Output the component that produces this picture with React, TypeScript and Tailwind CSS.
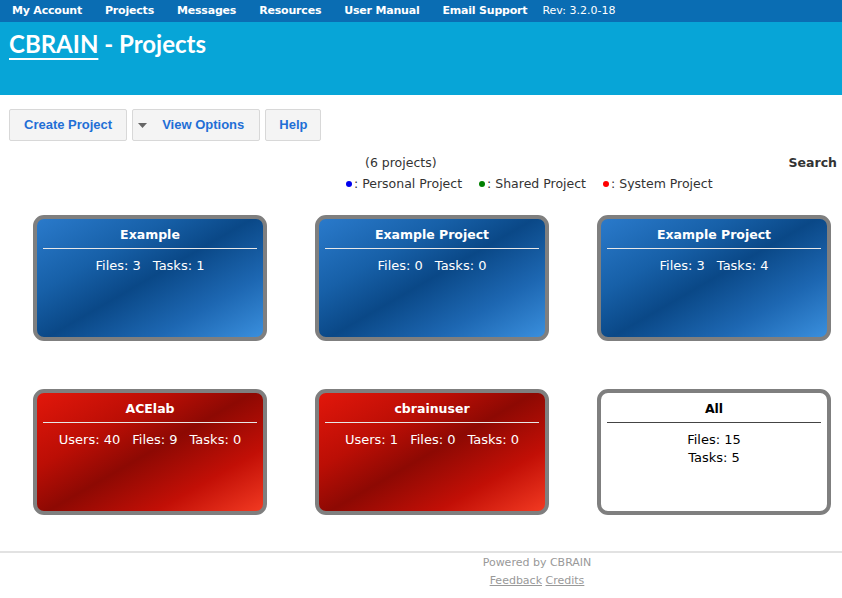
const verdana = "font-['DejaVu_Sans',Verdana,sans-serif]";

type Project = {
  name: string;
  kind: "personal" | "system" | "all";
  stats: string[];
  stacked?: boolean;
};

const projects: Project[] = [
  { name: "Example", kind: "personal", stats: ["Files: 3", "Tasks: 1"] },
  { name: "Example Project", kind: "personal", stats: ["Files: 0", "Tasks: 0"] },
  { name: "Example Project", kind: "personal", stats: ["Files: 3", "Tasks: 4"] },
  { name: "ACElab", kind: "system", stats: ["Users: 40", "Files: 9", "Tasks: 0"] },
  { name: "cbrainuser", kind: "system", stats: ["Users: 1", "Files: 0", "Tasks: 0"] },
  { name: "All", kind: "all", stats: ["Files: 15", "Tasks: 5"], stacked: true },
];

const navItems = ["My Account", "Projects", "Messages", "Resources", "User Manual", "Email Support"];

export default function App() {
  return (
    <div className={`min-h-[598px] bg-white ${verdana} text-[#333]`}>
      <div className="flex h-[22px] items-center bg-[#0a6db3] pl-[12px] text-[11px] text-white">
        {navItems.map((item) => (
          <span key={item} className="mr-[23px] font-bold tracking-[-0.2px]">
            {item}
          </span>
        ))}
        <span className="-ml-[8px]">Rev: 3.2.0-18</span>
      </div>
      <div className="h-[73px] bg-[#07a5d7] pl-[9px] pt-[8px]">
        <h1 className="font-['Lato',sans-serif] text-[24px] font-bold leading-[28px] text-white">
          <span className="underline decoration-2 underline-offset-[5px]">CBRAIN</span> - Projects
        </h1>
      </div>

      <div className="flex gap-[5px] pl-[9px] pt-[14px] font-['Liberation_Sans',Arial,sans-serif] text-[13px] font-bold text-[#1f6fd6]">
        <ToolButton className="px-[14px]">Create Project</ToolButton>
        <button className="flex h-[32px] items-center rounded-[2px] border border-[#d8d8d8] bg-[#f4f4f4] pl-[5px] pr-[15px]">
          <svg width="9" height="5" viewBox="0 0 9 5" className="mr-[15px]">
            <path d="M0 0h9L4.5 5z" fill="#666" />
          </svg>
          View Options
        </button>
        <ToolButton className="px-[13px]">Help</ToolButton>
      </div>

      <div className="relative mt-[12px] h-[44px] text-[12.5px]">
        <div className="absolute left-[365px] top-[1px]">(6 projects)</div>
        <div className="absolute right-[5px] top-[1px] font-bold">Search</div>
        <div className="absolute left-[346px] top-[22px] flex gap-[17px]">
          <Legend color="#0000ee" label="Personal Project" />
          <Legend color="#008000" label="Shared Project" />
          <Legend color="#ff0000" label="System Project" />
        </div>
      </div>

      <div className="grid grid-cols-[234px_234px_234px] gap-x-[48px] gap-y-[48px] pl-[33px] pt-[18px]">
        {projects.map((p, i) => (
          <ProjectCard key={i} project={p} />
        ))}
      </div>

      <div className="mt-[36px] border-t-2 border-[#e2e2e2] pl-[232px] pt-[2px] text-center text-[11px] text-[#999]">
        <div>Powered by CBRAIN</div>
        <div className="mt-[1px]">
          <span className="underline">Feedback</span> <span className="underline">Credits</span>
        </div>
      </div>
    </div>
  );
}

function ToolButton({ children, className }: { children: React.ReactNode; className: string }) {
  return (
    <button className={`h-[32px] rounded-[2px] border border-[#d8d8d8] bg-[#f4f4f4] ${className}`}>
      {children}
    </button>
  );
}

function Legend({ color, label }: { color: string; label: string }) {
  return (
    <span className="flex items-center">
      <span className="mr-[2px] inline-block size-[6px] rounded-full" style={{ backgroundColor: color }} />
      : {label}
    </span>
  );
}

function ProjectCard({ project }: { project: Project }) {
  const bg =
    project.kind === "personal"
      ? "bg-[linear-gradient(150deg,#2a7acb_0%,#1760a8_30%,#0a4887_50%,#1d67b2_75%,#3a8fdd_100%)] text-white"
      : project.kind === "system"
        ? "bg-[linear-gradient(150deg,#e2170b_0%,#bb0e05_30%,#8d0903_50%,#c20f06_75%,#f23a22_100%)] text-white"
        : "bg-white text-black";
  const rule = project.kind === "all" ? "border-[#444]" : "border-[#e8e8e8]";
  return (
    <div className={`h-[126px] rounded-[11px] border-[4px] border-[#7f7f7f] px-[6px] pt-[8px] ${bg}`}>
      <div className="text-center text-[12.5px] font-bold leading-[16px]">{project.name}</div>
      <div className={`mt-[5px] border-t ${rule}`} />
      <div
        className={`mt-[8px] flex justify-center text-[13px] leading-[18px] ${project.stacked ? "flex-col items-center" : "gap-[12px]"}`}
      >
        {project.stats.map((s) => (
          <span key={s}>{s}</span>
        ))}
      </div>
    </div>
  );
}
